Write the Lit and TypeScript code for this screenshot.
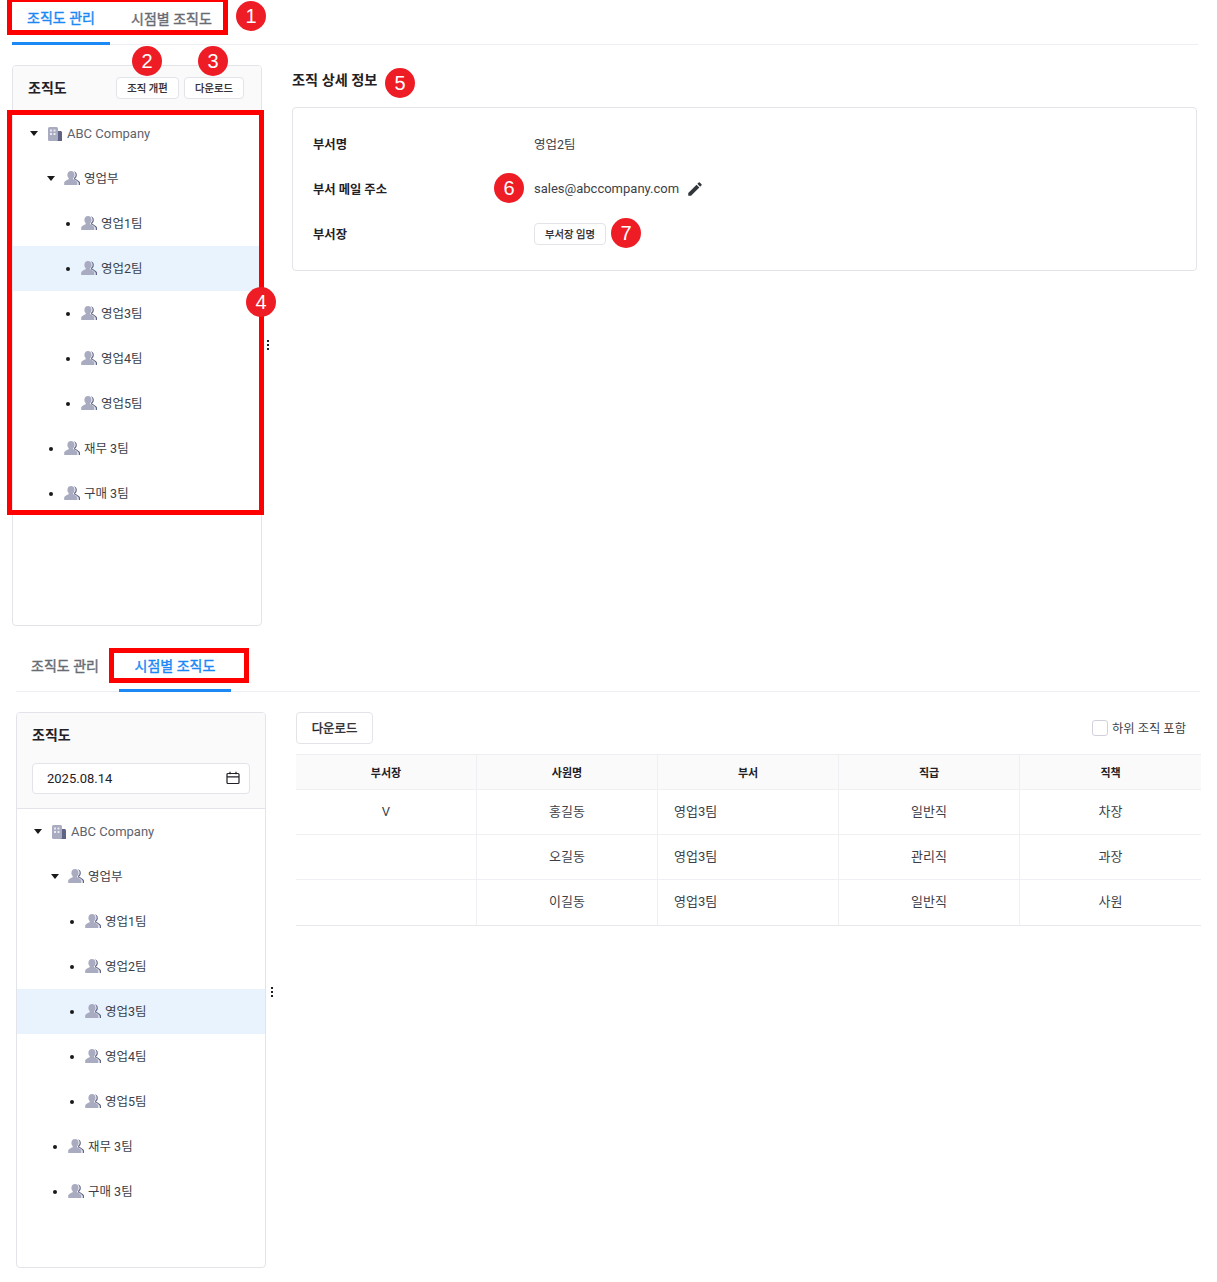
import { LitElement, html, css } from "lit";
import { customElement, property } from "lit/decorators.js";

const personIcon = html`<svg class="ico" width="18" height="18" viewBox="0 0 18 18">
  <path fill="#5f6484" d="M10.600 2.200c2 .2 3.200 1.800 3.200 3.700 0 1.400-.6 2.600-1.600 3.300v.7c1.900.7 3.800 1.800 4.800 3.500v2.600h-1.300v-2.200c-.9-1.600-2.800-2.600-4.600-3.300V8.600c1-.6 1.500-1.600 1.500-2.700 0-1.500-.8-3-2-3.700z"/>
  <path fill="#a9abc0" d="M8 2c2.100 0 3.600 1.700 3.600 3.900 0 1.300-.5 2.400-1.400 3.100v1.200c1.700.6 3.200 1.600 4.200 3V16H1.200v-2.800c1-1.400 2.600-2.400 4.500-3V9C4.900 8.300 4.400 7.200 4.400 5.900 4.400 3.700 5.900 2 8 2z"/>
</svg>`;

const buildingIcon = html`<svg class="ico" width="16" height="16" viewBox="0 0 16 16">
  <path fill="#5f6484" d="M9 5h4.500c.8 0 1.500.7 1.500 1.500V15H9z"/>
  <rect x="1" y="1" width="10" height="14" rx="1.500" fill="#a9abc0"/>
  <g fill="#e9e9f1"><rect x="3" y="3.500" width="2" height="2"/><rect x="6.500" y="3.500" width="2" height="2"/><rect x="3" y="7" width="2" height="2"/><rect x="6.500" y="7" width="2" height="2"/></g>
</svg>`;

const caret = html`<span class="toggle"><svg width="8" height="5" viewBox="0 0 8 5"><path d="M0 0h8L4 5z" fill="#1a1a1a"/></svg></span>`;
const dot = html`<span class="toggle"><i class="dot"></i></span>`;

interface Node { label: string; depth: number; kind: "root" | "open" | "leaf"; }
const nodes: Node[] = [
  { label: "ABC Company", depth: 0, kind: "root" },
  { label: "영업부", depth: 1, kind: "open" },
  { label: "영업1팀", depth: 2, kind: "leaf" },
  { label: "영업2팀", depth: 2, kind: "leaf" },
  { label: "영업3팀", depth: 2, kind: "leaf" },
  { label: "영업4팀", depth: 2, kind: "leaf" },
  { label: "영업5팀", depth: 2, kind: "leaf" },
  { label: "재무 3팀", depth: 1, kind: "leaf" },
  { label: "구매 3팀", depth: 1, kind: "leaf" },
];

const badges = [
  { n: 1, x: 251, y: 16 },
  { n: 2, x: 147, y: 61 },
  { n: 3, x: 213, y: 61 },
  { n: 4, x: 261, y: 302 },
  { n: 5, x: 400, y: 83 },
  { n: 6, x: 509, y: 188 },
  { n: 7, x: 626, y: 233 },
];

const rows = [
  { lead: "V", name: "홍길동", dept: "영업3팀", grade: "일반직", title: "차장" },
  { lead: "", name: "오길동", dept: "영업3팀", grade: "관리직", title: "과장" },
  { lead: "", name: "이길동", dept: "영업3팀", grade: "일반직", title: "사원" },
];

@customElement("org-tree")
class OrgTree extends LitElement {
  @property({ type: String }) selected = "";
  static styles = css`
    :host { display: block; }
    .row { height: 45px; display: flex; align-items: center; font-size: 12.500px; color: #3c3f48; }
    .row > span:last-child { position: relative; top: -1px; }
    .row.sel { background: #e8f3fe; }
    .d0 { padding-left: 17px; }
    .d1 { padding-left: 34px; }
    .d2 { padding-left: 51px; }
    .toggle { width: 8px; display: flex; justify-content: center; margin-right: 8px; }
    .toggle svg { display: block; }
    .dot { width: 4px; height: 4px; border-radius: 50%; background: #1a1a1a; display: block; }
    .ico { display: block; margin-right: 3px; flex: none; position: relative; top: -1px; }
    .root { color: #60636d; font-size: 13px; }
    .root .toggle { margin-right: 9px; }
    .root .ico { margin-right: 4px; top: 0; }
    .root > span:last-child { top: 0; }
  `;
  render() {
    return nodes.map(
      (n) => html`<div class="row d${n.depth} ${n.label === this.selected ? "sel" : ""} ${n.kind === "root" ? "root" : ""}">
        ${n.kind === "leaf" ? dot : caret}
        ${n.kind === "root" ? buildingIcon : personIcon}
        <span>${n.label}</span>
      </div>`
    );
  }
}

@customElement("app-root")
class AppRoot extends LitElement {
  static styles = css`
    :host {
      display: block; position: relative; width: 1217px; height: 1282px; overflow: hidden; background: #fff;
      font-family: Roboto, "Noto Sans CJK KR", sans-serif; color: #1f2126;
    }
    .tabs { display: flex; height: 45px; border-bottom: 1px solid #eceef3; box-sizing: border-box; font-size: 14px; -webkit-text-stroke: 0.4px currentColor; }
    .tab { display: flex; align-items: center; justify-content: center; color: #686b73; box-sizing: border-box; margin-bottom: -1px; padding-bottom: 10px; }
    .tab.on { color: #1a88f5; border-bottom: 3px solid #1a88f5; padding-bottom: 8px; }

    .s1 { margin: 0 19px 0 12px; height: 648px; }
    .s1 .tab.a { width: 98px; }
    .s1 .tab.b { width: 122px; padding-left: 1px; }
    .body { display: flex; margin-top: 20px; }
    .panel { width: 250px; height: 561px; box-sizing: border-box; border: 1px solid #e2e4ea; border-radius: 4px; flex: none; overflow: hidden; }
    .phead { height: 45px; box-sizing: border-box; background: #fafafa; display: flex; align-items: center; padding: 0 17px 2px 15px; }
    .ptitle { font-size: 14px; font-weight: 700; color: #1f2126; margin-right: auto; margin-bottom: 2px; }
    .btn { height: 22px; box-sizing: border-box; border: 1px solid #e2e4ea; border-radius: 4px; background: #fff; display: flex; align-items: center; justify-content: center; font-size: 10.300px; -webkit-text-stroke: 0.25px currentColor; color: #1f2126; }
    .btn.reorg { width: 63px; margin-right: 5px; }
    .btn.dl { width: 60px; }
    .split { width: 30px; flex: none; display: flex; justify-content: flex-start; padding-left: 5px; box-sizing: border-box; padding-top: 275px; }
    .dots { display: flex; flex-direction: column; gap: 2px; }
    .dots i { width: 2px; height: 2px; background: #1f2126; display: block; }
    .detail { flex: 1; min-width: 0; }
    .dtitle { font-size: 14.200px; font-weight: 700; height: 42px; line-height: 31px; }
    .card { height: 164px; border: 1px solid #e2e4ea; border-radius: 4px; box-sizing: border-box; padding: 13px 20px; margin-right: 1px; }
    .frow { height: 45px; display: flex; align-items: center; font-size: 12.300px; }
    .flabel { width: 221px; font-weight: 700; flex: none; }
    .fval { color: #3c3f48; display: flex; align-items: center; font-size: 12.500px; }
    .fval.mail { font-size: 13px; }
    .pencil { display: block; margin-left: 7px; }
    .btn.lead { width: 72px; height: 22px; }

    .s2 { margin: 0 17px 0 16px; }
    .s2 .tabs { height: 44px; }
    .s2 .tab.a { width: 103px; padding: 0 5px 10px 0; }
    .s2 .tab.b { width: 112px; padding-bottom: 8px; }
    .s2 .tab.on { padding-bottom: 8px; }
    .s2 .body { margin-top: 20px; }
    .s2 .panel { height: 556px; }
    .s2 .phead { height: 96px; display: block; padding: 0 15px; border-bottom: 1px solid #e2e4ea; }
    .s2 .ptitle { display: block; padding-top: 12px; margin-bottom: 0; line-height: 20px; }
    .date { margin-top: 18px; height: 31px; box-sizing: border-box; background: #fff; border: 1px solid #e2e4ea; border-radius: 4px; display: flex; align-items: center; justify-content: space-between; padding: 0 9px 1px 14px; font-size: 13px; color: #1f2126; }
    .s2 .split { padding-top: 275px; }
    .right { flex: 1; min-width: 0; }
    .bar { display: flex; justify-content: space-between; align-items: center; height: 32px; margin-bottom: 10px; }
    .btn.big { width: 77px; height: 32px; font-size: 12.400px; padding-bottom: 1px; -webkit-text-stroke: 0.35px currentColor; }
    .check { display: flex; align-items: center; gap: 4px; font-size: 12.300px; color: #3c3f48; margin-right: 14px; }
    .check span:last-child { padding-bottom: 1px; }
    .box { width: 16px; height: 16px; box-sizing: border-box; border: 1px solid #cfd2da; border-radius: 3px; background: #fff; }
    .table { display: grid; grid-template-columns: repeat(5, 181px); border-bottom: 1px solid #e6e8ee; border-top: 1px solid #eceef3; width: 905px; }
    .c { height: 45px; box-sizing: border-box; border-bottom: 1px solid #eef0f4; border-right: 1px solid #eef0f4; display: flex; align-items: center; justify-content: center; font-size: 13px; color: #3c3f48; padding-bottom: 4px; }
    .c.lead { padding-bottom: 2px; }
    .c:nth-child(5n) { border-right: none; }
    .c.h { height: 35px; background: #fafafa; font-size: 11px; font-weight: 700; color: #1f2126; padding-bottom: 0; }
    .c.l { justify-content: flex-start; padding-left: 16px; }
    .c.last { border-bottom: none; }

    .box-red { position: absolute; border: 5px solid #ff0000; box-sizing: border-box; pointer-events: none; }
    .r1 { left: 7px; top: -3px; width: 221px; height: 38px; }
    .r4 { left: 7px; top: 110px; width: 257px; height: 405px; }
    .r8 { left: 109px; top: 648px; width: 140px; height: 35px; }
    .badge { position: absolute; width: 30px; height: 30px; margin: -15px 0 0 -15px; border-radius: 50%; background: #ee1c25; color: #fff; font-size: 20px; font-family: "Liberation Sans", sans-serif; display: flex; align-items: center; justify-content: center; }
  `;

  render() {
    const split = html`<div class="split"><div class="dots"><i></i><i></i><i></i></div></div>`;
    return html`
      <section class="s1">
        <div class="tabs">
          <div class="tab a on">조직도 관리</div>
          <div class="tab b">시점별 조직도</div>
        </div>
        <div class="body">
          <div class="panel">
            <div class="phead">
              <span class="ptitle">조직도</span>
              <div class="btn reorg">조직 개편</div>
              <div class="btn dl">다운로드</div>
            </div>
            <org-tree selected="영업2팀"></org-tree>
          </div>
          ${split}
          <div class="detail">
            <div class="dtitle">조직 상세 정보</div>
            <div class="card">
              <div class="frow"><span class="flabel">부서명</span><span class="fval">영업2팀</span></div>
              <div class="frow"><span class="flabel">부서 메일 주소</span><span class="fval mail">sales@abccompany.com
                <svg class="pencil" width="18" height="18" viewBox="0 0 24 24"><path fill="#33363d" d="M3 17.250V21h3.750L17.810 9.940l-3.750-3.750L3 17.250zM20.710 7.040a1 1 0 0 0 0-1.410l-2.340-2.340a1 1 0 0 0-1.410 0l-1.830 1.830 3.750 3.750 1.830-1.830z"/></svg></span></div>
              <div class="frow"><span class="flabel">부서장</span><div class="btn lead">부서장 임명</div></div>
            </div>
          </div>
        </div>
      </section>
      <section class="s2">
        <div class="tabs">
          <div class="tab a">조직도 관리</div>
          <div class="tab b on">시점별 조직도</div>
        </div>
        <div class="body">
          <div class="panel">
            <div class="phead">
              <span class="ptitle">조직도</span>
              <div class="date">2025.08.14
                <svg width="14" height="14" viewBox="0 0 14 14" fill="none" stroke="#1f2126" stroke-width="1.200"><rect x="1" y="2.500" width="12" height="10" rx="1"/><path d="M1 5.800h12M4 .8v2.500M10 .8v2.500"/></svg>
              </div>
            </div>
            <org-tree selected="영업3팀"></org-tree>
          </div>
          ${split}
          <div class="right">
            <div class="bar">
              <div class="btn big">다운로드</div>
              <label class="check"><span class="box"></span><span>하위 조직 포함</span></label>
            </div>
            <div class="table">
              <div class="c h">부서장</div><div class="c h">사원명</div><div class="c h">부서</div><div class="c h">직급</div><div class="c h">직책</div>
              ${rows.map((r, i) => {
                const last = i === rows.length - 1 ? "last" : "";
                return html`<div class="c lead ${last}">${r.lead}</div><div class="c ${last}">${r.name}</div><div class="c l ${last}">${r.dept}</div><div class="c ${last}">${r.grade}</div><div class="c ${last}">${r.title}</div>`;
              })}
            </div>
          </div>
        </div>
      </section>
      <div class="box-red r1"></div>
      <div class="box-red r4"></div>
      <div class="box-red r8"></div>
      ${badges.map((b) => html`<div class="badge" style="left:${b.x}px;top:${b.y}px">${b.n}</div>`)}
    `;
  }
}
